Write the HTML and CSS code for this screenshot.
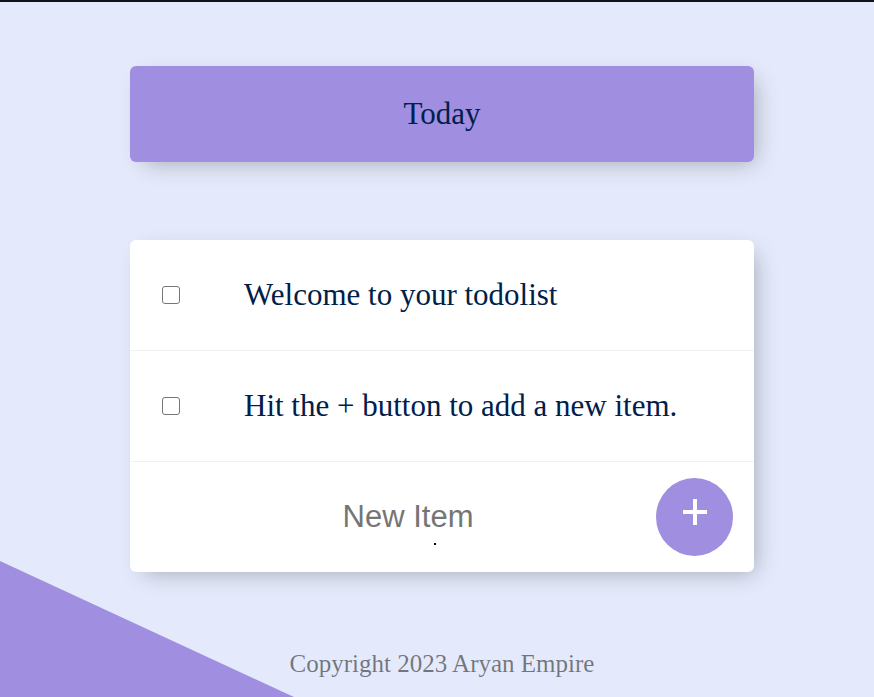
FILE: index.html
```html
<!DOCTYPE html>
<html lang="en">
<head>
<meta charset="utf-8">
<title>Todolist</title>
<link rel="stylesheet" href="styles.css">
</head>
<body>
<div class="topbar"></div>
<div class="wedge"></div>
<main class="wrap">
  <div class="heading"><h1 class="title">Today</h1></div>
  <div class="list">
    <div class="item">
      <input type="checkbox" class="check">
      <p class="text">Welcome to your todolist</p>
    </div>
    <div class="item">
      <input type="checkbox" class="check">
      <p class="text">Hit the + button to add a new item.</p>
    </div>
    <form class="item new" onsubmit="return false">
      <input type="text" class="field" placeholder="New Item" autocomplete="off">
      <button type="submit" class="add" aria-label="Add">
        <svg width="24" height="26" viewBox="0 0 24 26"><rect x="10" y="0" width="4" height="26" fill="#fff"/><rect x="0" y="11" width="24" height="4" fill="#fff"/></svg>
      </button>
      <span class="dot"></span>
    </form>
  </div>
  <footer class="foot">Copyright 2023 Aryan Empire</footer>
</main>
</body>
</html>
```

FILE: styles.css
```css
html, body {
  margin: 0;
  padding: 0;
}
body {
  background: #E4EAFB;
  font-family: "Liberation Serif", "Times New Roman", serif;
  min-height: 697px;
  position: relative;
  overflow: hidden;
}
.topbar {
  height: 2px;
  background: #12131a;
}
.wedge {
  position: absolute;
  left: 0;
  top: 0;
  width: 874px;
  height: 697px;
  background: #A08EE0;
  clip-path: polygon(0 561px, 294px 697px, 0 697px);
  z-index: 0;
}
.wrap {
  position: relative;
  z-index: 1;
  width: 624px;
  margin: 0 0 0 130px;
}
.heading {
  margin-top: 64px;
  height: 96px;
  background: #A08EE0;
  border-radius: 6px;
  display: flex;
  align-items: center;
  justify-content: center;
  box-shadow: 7px 7px 22px -7px rgba(0, 0, 0, 0.3);
}
.title {
  margin: 0;
  font-size: 31px;
  font-weight: normal;
  color: #00204a;
}
.list {
  margin-top: 78px;
  background: #fff;
  border-radius: 6px;
  box-shadow: 7px 7px 22px -7px rgba(0, 0, 0, 0.3);
}
.item {
  height: 110px;
  display: flex;
  align-items: center;
  border-bottom: 1px solid #F1F1F1;
  margin: 0;
}
.item:last-child {
  border-bottom: 0;
}
.check {
  appearance: none;
  -webkit-appearance: none;
  width: 18px;
  height: 18px;
  margin: 0 0 0 32px;
  border: 1.4px solid #767676;
  border-radius: 3px;
  background: #fff;
  box-sizing: border-box;
  flex: none;
}
.text {
  margin: 0 0 0 64px;
  font-size: 31px;
  color: #00204a;
}
.new {
  position: relative;
  padding-left: 30px;
}
.field {
  flex: 1;
  min-width: 0;
  height: 60px;
  border: none;
  background: transparent;
  text-align: center;
  font-family: "Liberation Sans", Arial, sans-serif;
  font-size: 31px;
  color: #333;
  outline: none;
  padding: 0;
}
.field::placeholder {
  color: #757575;
}
.add {
  flex: none;
  width: 77px;
  height: 78px;
  margin-right: 21px;
  border: 0;
  border-radius: 50%;
  background: #A08EE0;
  display: flex;
  align-items: center;
  justify-content: center;
  padding: 0 0 10px 0;
}
.add svg {
  display: block;
}
.dot {
  position: absolute;
  left: 304px;
  top: 81px;
  width: 2px;
  height: 2px;
  background: #000;
}
.foot {
  margin-top: 78px;
  text-align: center;
  font-size: 25px;
  line-height: 28px;
  color: rgba(0, 0, 0, 0.5);
}
```
